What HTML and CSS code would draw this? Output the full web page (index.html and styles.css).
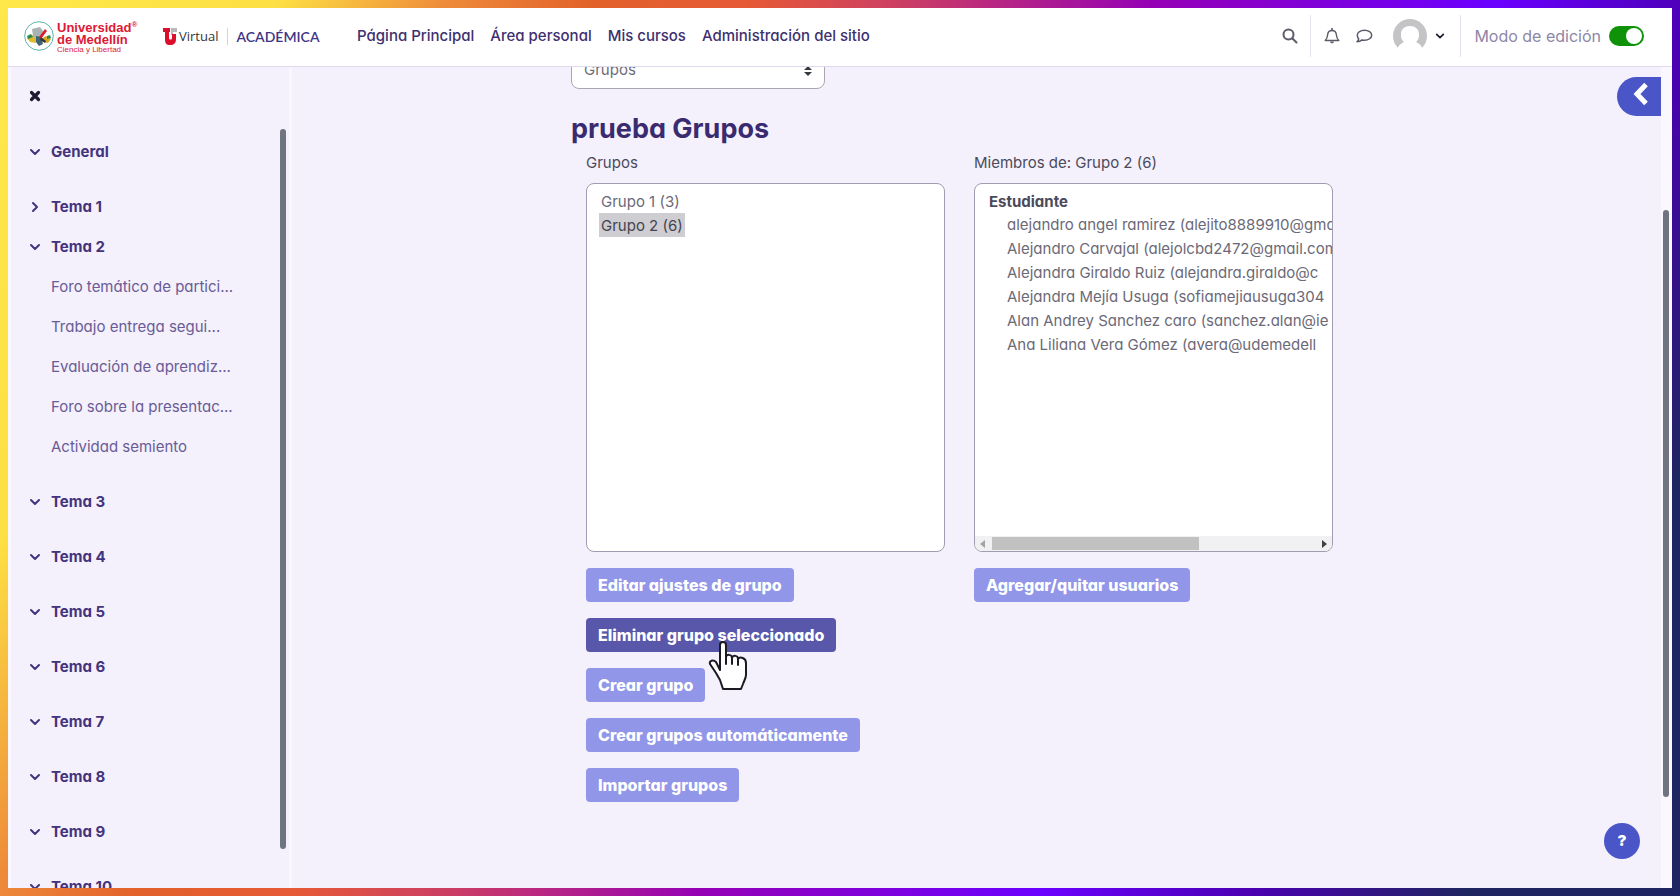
FILE: index.html
```html
<!DOCTYPE html>
<html lang="es">
<head>
    <meta charset="UTF-8">
    <meta name="viewport" content="width=device-width, initial-scale=1.0">
    <title>prueba Grupos</title>
    <link rel="stylesheet" href="styles.css">
</head>
<body>
    <svg class="sprite" aria-hidden="true">
        <symbol id="chevron" viewBox="0 0 12 12"><path d="M2 4l4 4 4-4" fill="none" stroke="currentColor" stroke-width="2" stroke-linecap="round" stroke-linejoin="round"/></symbol>
    </svg>

    <div class="page">
        <header class="navbar">
            <a class="brand" href="#">
                <svg class="seal" viewBox="0 0 30 30" aria-hidden="true">
                    <circle cx="15" cy="15" r="14.3" fill="#fff" stroke="#5bb5a8" stroke-width="1"/>
                    <path d="M3 17l5-3 6 3-2 5-6-1z" fill="#e3b92f"/>
                    <path d="M17 18l5-3 5 3-3 4-5-1z" fill="#d9a821"/>
                    <path d="M3 15l4-2 2 3-5 2zM23 15l3-1 1 3-4 1z" fill="#2d8a4b"/>
                    <path d="M8 8l8-2 3 4-2 8-4 2-4-5z" fill="#a9b3b3"/>
                    <path d="M12 15l5 1 2 7-4 2-3-4z" fill="#3d6672"/>
                    <path d="M21 8l2 2-6 8-2-2z" fill="#d31f2f"/>
                    <path d="M17 16l5 4-1 2-5-3z" fill="#33383c"/>
                </svg>
                <span class="brand-text">
                    <span class="brand-name">Universidad<sup>®</sup></span>
                    <span class="brand-name">de Medellín</span>
                    <span class="brand-motto">Ciencia y Libertad</span>
                </span>
            </a>
            <a class="virtual" href="#">
                <svg class="virtual-mark" viewBox="0 0 15 18" aria-hidden="true">
                    <path d="M8 1h6v4h-4v3H8z" fill="#b9b9bd"/>
                    <path d="M0 1h7v4H6v6c0 2 3 2 3 0V7h4v5c0 4-2 6-6 6s-5-2-5-6V5H0z" fill="#db0f2b"/>
                </svg>
                <span>Virtual</span>
                <span class="campus">ACADÉMICA</span>
            </a>
            <nav class="main-nav">
                <a href="#">Página Principal</a>
                <a href="#">Área personal</a>
                <a href="#">Mis cursos</a>
                <a href="#">Administración del sitio</a>
            </nav>
            <div class="user-nav">
                <button class="icon-btn search" aria-label="Buscar">
                    <svg width="16" height="16" viewBox="0 0 16 16"><circle cx="6.5" cy="6.5" r="5" fill="none" stroke="currentColor" stroke-width="2"/><path d="M10.5 10.5l4 4" stroke="currentColor" stroke-width="2" stroke-linecap="round"/></svg>
                </button>
                <div class="popovers">
                    <button class="icon-btn" aria-label="Notificaciones">
                        <svg width="16" height="16" viewBox="0 0 16 16"><path d="M1.2 12.5c2-1.700 2.300-3.500 2.500-6C3.900 4 5.500 2.500 8 2.500S12.100 4 12.300 6.500c.2 2.500.5 4.300 2.500 6z" fill="none" stroke="currentColor" stroke-width="1.400" stroke-linejoin="round"/><path d="M8 .6v1.800" stroke="currentColor" stroke-width="1.600" stroke-linecap="round"/><path d="M6 13.500c.2 2.400 3.800 2.400 4 0z" fill="currentColor"/></svg>
                    </button>
                    <button class="icon-btn" aria-label="Mensajes">
                        <svg width="18" height="16" viewBox="0 0 18 16"><path d="M9.500 2.200c4 0 7.200 2.200 7.200 5s-3.200 5-7.200 5c-.9 0-1.700-.1-2.500-.3-1.300 1.100-2.900 1.700-5 1.900.9-.9 1.500-1.900 1.700-3C2.700 9.900 2.300 8.600 2.300 7.200c0-2.800 3.200-5 7.200-5z" fill="none" stroke="currentColor" stroke-width="1.500" stroke-linejoin="round"/></svg>
                    </button>
                </div>
                <button class="user-menu" aria-label="Menú de usuario">
                    <svg width="34" height="34" viewBox="0 0 34 34"><circle cx="17" cy="17" r="17" fill="#c4c4c6"/><path d="M3 34c1-6 4-9 8-11-3-3-3-5-3-8 0-5 4-8 9-8s9 3 9 8c0 3 0 5-3 8 4 2 7 5 8 11z" fill="#fff"/></svg>
                    <svg class="chev" width="10" height="10"><use href="#chevron"/></svg>
                </button>
                <label class="edit-mode">
                    <span>Modo de edición</span>
                    <input type="checkbox" role="switch" checked>
                </label>
            </div>
        </header>

        <div class="body">
            <aside class="drawer">
                <div class="drawer-content">
                    <button class="close" aria-label="Cerrar índice">
                        <svg width="12" height="12" viewBox="0 0 12 12"><path d="M2.500 2.500l7 7M9.500 2.500l-7 7" stroke="#1d1b2b" stroke-width="3.200" stroke-linecap="round"/></svg>
                    </button>
                    <nav class="index">
                        <section class="topic">
                            <a class="topic-title" href="#"><svg class="chev" width="12" height="12"><use href="#chevron"/></svg>General</a>
                        </section>
                        <section class="topic closed">
                            <a class="topic-title" href="#"><svg class="chev" width="12" height="12"><use href="#chevron"/></svg>Tema 1</a>
                        </section>
                        <section class="topic">
                            <a class="topic-title" href="#"><svg class="chev" width="12" height="12"><use href="#chevron"/></svg>Tema 2</a>
                            <a class="activity" href="#">Foro temático de partici...</a>
                            <a class="activity" href="#">Trabajo entrega segui...</a>
                            <a class="activity" href="#">Evaluación de aprendiz...</a>
                            <a class="activity" href="#">Foro sobre la presentac...</a>
                            <a class="activity" href="#">Actividad semiento</a>
                        </section>
                        <section class="topic">
                            <a class="topic-title" href="#"><svg class="chev" width="12" height="12"><use href="#chevron"/></svg>Tema 3</a>
                        </section>
                        <section class="topic">
                            <a class="topic-title" href="#"><svg class="chev" width="12" height="12"><use href="#chevron"/></svg>Tema 4</a>
                        </section>
                        <section class="topic">
                            <a class="topic-title" href="#"><svg class="chev" width="12" height="12"><use href="#chevron"/></svg>Tema 5</a>
                        </section>
                        <section class="topic">
                            <a class="topic-title" href="#"><svg class="chev" width="12" height="12"><use href="#chevron"/></svg>Tema 6</a>
                        </section>
                        <section class="topic">
                            <a class="topic-title" href="#"><svg class="chev" width="12" height="12"><use href="#chevron"/></svg>Tema 7</a>
                        </section>
                        <section class="topic">
                            <a class="topic-title" href="#"><svg class="chev" width="12" height="12"><use href="#chevron"/></svg>Tema 8</a>
                        </section>
                        <section class="topic">
                            <a class="topic-title" href="#"><svg class="chev" width="12" height="12"><use href="#chevron"/></svg>Tema 9</a>
                        </section>
                        <section class="topic">
                            <a class="topic-title" href="#"><svg class="chev" width="12" height="12"><use href="#chevron"/></svg>Tema 10</a>
                        </section>
                    </nav>
                </div>
                <div class="drawer-track"><div class="thumb"></div></div>
            </aside>

            <main class="main">
                <div class="content">
                    <div class="jump">
                        <select class="jump-select" aria-label="Navegación terciaria de participantes">
                            <option>Grupos</option>
                        </select>
                        <svg class="jump-arrows" width="8" height="10" viewBox="0 0 8 10" aria-hidden="true"><path d="M4 0l4 4H0zM4 10l4-4H0z" fill="#343a40"/></svg>
                    </div>
                    <h2>prueba Grupos</h2>
                    <form class="groups">
                        <div class="col">
                            <label for="groups">Grupos</label>
                            <div class="listbox">
                                <select id="groups" multiple>
                                    <option>Grupo 1 (3)</option>
                                    <option selected>Grupo 2 (6)</option>
                                </select>
                            </div>
                            <button type="button" class="btn">Editar ajustes de grupo</button>
                            <div class="hovered">
                                <button type="button" class="btn active">Eliminar grupo seleccionado</button>
                                <svg class="pointer" width="40" height="52" viewBox="0 0 40 52" aria-hidden="true"><path d="M12 29V4c0-4 6-4 6 0v12c0-3 6-3 6 1 1-3 6-3 6 1 2-3 8-1 8 4v12c0 3-2 6-3 9l-2 5H15l-3-9-4-7-6-9c-1-3 3-5 6-2z" fill="#fff" stroke="#1b1a22" stroke-width="2" stroke-linejoin="round"/><path d="M18 15v8M24 17v6M30 18v6" stroke="#1b1a22" stroke-width="2" stroke-linecap="round"/></svg>
                            </div>
                            <button type="button" class="btn">Crear grupo</button>
                            <button type="button" class="btn">Crear grupos automáticamente</button>
                            <button type="button" class="btn">Importar grupos</button>
                        </div>
                        <div class="col">
                            <label for="members">Miembros de: Grupo 2 (6)</label>
                            <div class="listbox">
                                <select id="members" multiple>
                                    <optgroup label="Estudiante">
                                        <option>alejandro angel ramirez (alejito8889910@gmail.com)</option>
                                        <option>Alejandro Carvajal (alejolcbd2472@gmail.com)</option>
                                        <option>Alejandra Giraldo Ruiz (alejandra.giraldo@c</option>
                                        <option>Alejandra Mejía Usuga (sofiamejiausuga304</option>
                                        <option>Alan Andrey Sanchez caro (sanchez.alan@ie</option>
                                        <option>Ana Liliana Vera Gómez (avera@udemedell</option>
                                    </optgroup>
                                </select>
                                <div class="hscroll" aria-hidden="true">
                                    <svg width="5" height="8" viewBox="0 0 5 8"><path d="M5 0v8L0 4z" fill="#a3a3a3"/></svg>
                                    <div class="hscroll-track"><div class="hscroll-thumb"></div></div>
                                    <svg width="5" height="8" viewBox="0 0 5 8"><path d="M0 0v8l5-4z" fill="#404040"/></svg>
                                </div>
                            </div>
                            <button type="button" class="btn">Agregar/quitar usuarios</button>
                        </div>
                    </form>
                </div>
                <button class="blocks-toggle" aria-label="Abrir cajón de bloques">
                    <svg width="16" height="24" viewBox="0 0 16 24"><path d="M13 2.500L4 12l9 9.500" fill="none" stroke="#fff" stroke-width="5"/></svg>
                </button>
                <button class="help">?</button>
            </main>
            <div class="page-track"><div class="thumb"></div></div>
        </div>
    </div>
</body>
</html>
```
FILE: styles.css
```css
* {
    box-sizing: border-box;
}
body {
    margin: 0;
    height: 100vh;
    padding: 8px;
    font-family: Inter, "Open Sans", sans-serif;
    font-feature-settings: "cv11";
    font-size: 15px;
    line-height: 24px;
    color: #4b4a5a;
    background: linear-gradient(117deg, #ffe84a 0%, #fde043 13%, #ee8a3a 21%, #e2602a 28%, #e65a36 35%, #c93a68 43%, #9500b5 54%, #6a00ff 70%, #4a00b0 80%, #1e2560 90%);
}
a {
    color: inherit;
    text-decoration: none;
}
button {
    border: 0;
    padding: 0;
    background: none;
    color: inherit;
    font: inherit;
    cursor: pointer;
}
svg {
    display: block;
    flex: none;
}
.sprite {
    position: absolute;
    width: 0;
    height: 0;
}
.page {
    display: flex;
    flex-direction: column;
    height: 100%;
    overflow: hidden;
    background: #f4f0fc;
}

/* top bar */
.navbar {
    display: flex;
    align-items: center;
    flex: none;
    height: 59px;
    padding: 0 28px 2px 16px;
    background: #fff;
    border-bottom: 1px solid #dfdaeb;
    white-space: nowrap;
}
.brand {
    display: flex;
    align-items: center;
    gap: 3px;
    width: 139px;
    color: #dc1a36;
    font-family: "Liberation Sans", Arial, sans-serif;
}
.seal {
    width: 30px;
    height: 30px;
}
.brand-text {
    display: flex;
    flex-direction: column;
    padding-top: 4px;
}
.brand-name {
    font-size: 13px;
    line-height: 12px;
    font-weight: bold;
}
.brand-name sup {
    font-size: 8px;
    line-height: 0;
}
.brand-motto {
    font-size: 8px;
    line-height: 8px;
}
.virtual {
    display: flex;
    align-items: center;
    gap: 1px;
    width: 194px;
    font-family: "Open Sans", sans-serif;
    font-size: 13px;
    color: #34343c;
}
.virtual-mark {
    width: 15px;
    height: 18px;
}
.campus {
    margin-left: 8px;
    padding-left: 8px;
    border-left: 1px solid #d5d2de;
    line-height: 17px;
    font-family: Lato, sans-serif;
    font-size: 14px;
    font-weight: 600;
    color: #3f3585;
}
.main-nav {
    display: flex;
    gap: 16px;
    font-weight: 500;
    color: #40306f;
}
.user-nav {
    display: flex;
    align-items: center;
    margin-left: auto;
    color: #5d5b69;
}
.search {
    padding-right: 12px;
}
.popovers {
    display: flex;
    align-items: center;
    gap: 15px;
    height: 42px;
    padding: 0 20px 0 13px;
    border-left: 1px solid #e6e2ee;
}
.user-menu {
    display: flex;
    align-items: center;
    gap: 8px;
    padding-right: 15px;
    color: #1d1b2b;
}
.edit-mode {
    display: flex;
    align-items: center;
    gap: 8px;
    height: 42px;
    padding-left: 13px;
    border-left: 1px solid #e6e2ee;
    font-size: 16px;
    color: #8d86a8;
}
.edit-mode input {
    appearance: none;
    display: flex;
    justify-content: flex-end;
    width: 35px;
    height: 20px;
    margin: 0;
    padding: 2px;
    border-radius: 10px;
    background: #0f9207;
}
.edit-mode input::before {
    content: "";
    width: 16px;
    border-radius: 50%;
    background: #fff;
}

/* course index */
.body {
    display: flex;
    flex: 1;
    min-height: 0;
}
.drawer {
    display: flex;
    flex: none;
    width: 284px;
    border-left: 3px solid #faf8fe;
}
.drawer-content {
    flex: 1;
    overflow: hidden;
    padding: 23px 0 0 18px;
}
.close {
    display: block;
    margin-bottom: 30px;
}
.topic {
    margin-bottom: 15px;
}
.topic.closed {
    margin-bottom: 0;
}
.topic-title {
    display: flex;
    align-items: center;
    gap: 10px;
    height: 40px;
    font-weight: 700;
    color: #43347c;
}
.closed .chev {
    transform: rotate(-90deg);
}
.activity {
    display: block;
    padding-left: 22px;
    line-height: 40px;
    color: #695c96;
}
.drawer-track {
    width: 16px;
    padding: 62px 3px 39px 4px;
    border-right: 3px solid #f9f7fe;
}
.thumb {
    height: 100%;
    border-radius: 3px;
    background: #707480;
}

/* main area */
.main {
    position: relative;
    flex: 1;
    overflow: hidden;
    padding: 0 35px 0 0;
}
.content {
    max-width: 776px;
    margin: -16px auto 0;
}
.jump {
    position: relative;
    width: 254px;
}
.jump-select {
    display: block;
    appearance: none;
    width: 100%;
    height: 38px;
    padding: 0 12px;
    border: 1px solid #aaa6b6;
    border-radius: 8px;
    background: #fff;
    color: #6d6b78;
    font: inherit;
    font-feature-settings: inherit;
}
.jump-arrows {
    position: absolute;
    right: 13px;
    top: 15px;
}
h2 {
    margin: 23px 0 5px;
    font-size: 27px;
    line-height: 34px;
    font-weight: 700;
    color: #3a2b70;
}
.groups {
    display: grid;
    grid-template-columns: 1fr 1fr;
}
.col {
    display: flex;
    flex-direction: column;
    align-items: flex-start;
    gap: 16px;
    padding: 0 14px 0 15px;
}
.col label {
    margin-bottom: -8px;
}
.listbox {
    position: relative;
    width: 100%;
}
.listbox select {
    display: block;
    width: 100%;
    height: 369px;
    padding: 5px 12px;
    overflow: hidden;
    border: 1px solid #a19cb0;
    border-radius: 8px;
    background: #fff;
    color: #6b6977;
    font: inherit;
    font-feature-settings: inherit;
}
.listbox option {
    width: fit-content;
    min-height: 24px;
    padding: 3px 2px 0;
}
.listbox optgroup {
    padding: 3px 0 0;
    font-weight: 700;
    color: #4b4a5a;
}
.listbox optgroup option {
    padding-left: 20px;
    font-weight: 400;
    color: #6b6977;
}
.listbox option:checked {
    background: #cecdd1;
    color: #45434f;
}
.hscroll {
    position: absolute;
    left: 1px;
    right: 1px;
    bottom: 1px;
    display: flex;
    align-items: center;
    gap: 7px;
    height: 15px;
    padding: 0 5px;
    border-radius: 0 0 7px 7px;
    background: #f1f0f2;
}
.hscroll-track {
    flex: 1;
}
.hscroll-thumb {
    width: 64%;
    height: 13px;
    background: #c1c1c1;
}
.btn {
    height: 34px;
    padding: 0 12px;
    border-radius: 4px;
    background: #9296e8;
    color: #fff;
    font-size: 16px;
    font-weight: 800;
    font-feature-settings: inherit;
}
.btn.active {
    background: #5857a9;
}
.hovered {
    position: relative;
    height: 34px;
}
.pointer {
    position: absolute;
    left: 122px;
    top: 23px;
    z-index: 1;
}
.blocks-toggle {
    position: absolute;
    right: 0;
    top: 10px;
    display: flex;
    justify-content: center;
    width: 44px;
    height: 39px;
    padding: 5px 0 0 4px;
    border-radius: 20px 0 0 20px;
    background: #4a55c7;
}
.help {
    position: absolute;
    right: 21px;
    bottom: 29px;
    width: 36px;
    height: 36px;
    border-radius: 50%;
    background: #4a55c7;
    color: #fff;
    font-weight: 900;
}
.page-track {
    width: 11px;
    padding: 143px 3px 91px 2px;
    background: #faf8fe;
}
```
